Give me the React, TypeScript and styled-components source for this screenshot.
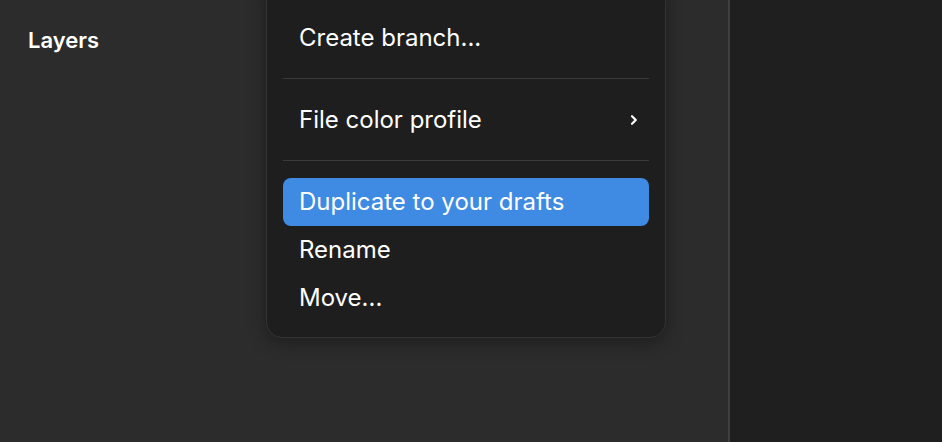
import React from "react";
import styled, { createGlobalStyle } from "styled-components";

const GlobalStyle = createGlobalStyle`
  html, body {
    margin: 0;
    padding: 0;
    background: #2c2c2c;
    font-family: Inter, "Noto Sans", sans-serif;
    -webkit-font-smoothing: antialiased;
  }
`;

const Screen = styled.div`
  display: flex;
  flex-direction: row;
  width: 942px;
  height: 442px;
  overflow: hidden;
`;

const LeftPanel = styled.div`
  position: relative;
  flex: 1;
  background: #2c2c2c;
  padding: 26px 28px;
`;

const PanelTitle = styled.div`
  color: #ffffff;
  font-size: 22px;
  font-weight: 600;
  line-height: 28px;
`;

const Divider = styled.div`
  width: 2px;
  background: #3f3f3f;
`;

const RightPanel = styled.div`
  width: 212px;
  background: #1f1f1f;
`;

const Menu = styled.div`
  position: absolute;
  left: 266px;
  top: -22px;
  width: 400px;
  box-sizing: border-box;
  padding: 35px 0 15px;
  background: #1e1e1e;
  border: 1px solid #333333;
  border-radius: 16px;
  box-shadow: 0 4px 18px rgba(0, 0, 0, 0.35);
`;

const Item = styled.div<{ $active?: boolean }>`
  display: flex;
  align-items: center;
  justify-content: space-between;
  height: 48px;
  margin: 0 16px;
  padding: 0 10px 0 16px;
  border-radius: 8px;
  color: #ffffff;
  font-size: 24px;
  line-height: 48px;
  background: ${({ $active }) => ($active ? "#3f8ae2" : "transparent")};
`;

const Separator = styled.div`
  height: 1px;
  margin: 16px 16px 17px;
  background: #3a3a3a;
`;

const Chevron = () => (
  <svg width="10" height="12" viewBox="0 0 10 12" fill="none">
    <path
      d="M3 2.2L6.8 6L3 9.8"
      stroke="#ffffff"
      strokeWidth="2.2"
      strokeLinecap="round"
      strokeLinejoin="round"
    />
  </svg>
);

const App = () => {
  return (
    <>
      <GlobalStyle />
      <Screen>
        <LeftPanel>
          <PanelTitle>Layers</PanelTitle>
          <Menu>
            <Item>Create branch...</Item>
            <Separator />
            <Item>
              File color profile
              <Chevron />
            </Item>
            <Separator />
            <Item $active>Duplicate to your drafts</Item>
            <Item>Rename</Item>
            <Item>Move...</Item>
          </Menu>
        </LeftPanel>
        <Divider />
        <RightPanel />
      </Screen>
    </>
  );
};

export default App;
